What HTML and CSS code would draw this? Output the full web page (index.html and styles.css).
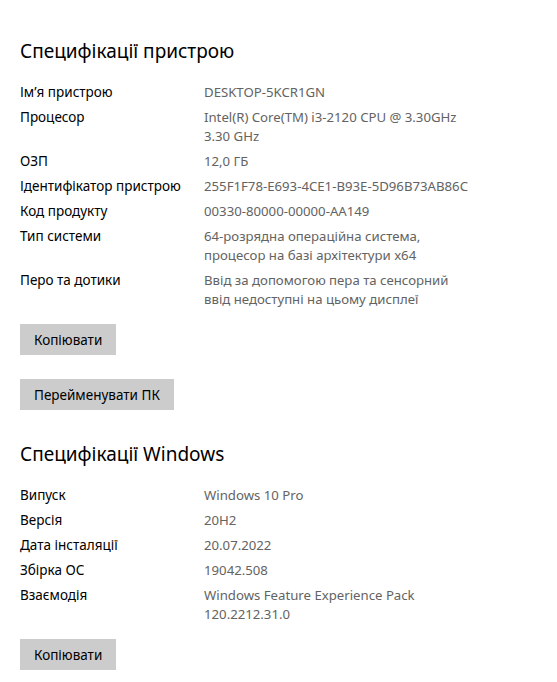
FILE: index.html
```html
<!DOCTYPE html>
<html lang="uk">
<head>
  <meta charset="UTF-8">
  <title>Про систему</title>
  <link rel="stylesheet" href="styles.css">
</head>
<body>

  <!-- Device specs -->
  <section class="section">
    <h2>Специфікації пристрою</h2>
    <dl class="specs">
      <dt>Ім’я пристрою</dt>
      <dd>DESKTOP-5KCR1GN</dd>

      <dt>Процесор</dt>
      <dd>Intel(R) Core(TM) i3-2120 CPU @ 3.30GHz<br>3.30 GHz</dd>

      <dt>ОЗП</dt>
      <dd>12,0 ГБ</dd>

      <dt>Ідентифікатор пристрою</dt>
      <dd>255F1F78-E693-4CE1-B93E-5D96B73AB86C</dd>

      <dt>Код продукту</dt>
      <dd>00330-80000-00000-AA149</dd>

      <dt>Тип системи</dt>
      <dd>64-розрядна операційна система,<br>процесор на базі архітектури x64</dd>

      <dt>Перо та дотики</dt>
      <dd>Ввід за допомогою пера та сенсорний<br>ввід недоступні на цьому дисплеї</dd>
    </dl>
    <button type="button">Копіювати</button>
    <button type="button" class="rename">Перейменувати ПК</button>
  </section>

  <!-- Windows specs -->
  <section class="section">
    <h2>Специфікації Windows</h2>
    <dl class="specs">
      <dt>Випуск</dt>
      <dd>Windows 10 Pro</dd>

      <dt>Версія</dt>
      <dd>20H2</dd>

      <dt>Дата інсталяції</dt>
      <dd>20.07.2022</dd>

      <dt>Збірка ОС</dt>
      <dd>19042.508</dd>

      <dt>Взаємодія</dt>
      <dd>Windows Feature Experience Pack<br>120.2212.31.0</dd>
    </dl>
    <button type="button">Копіювати</button>
  </section>

</body>
</html>
```

FILE: styles.css
```css
* {
  box-sizing: border-box;
  font-family: "Noto Sans", "Open Sans", sans-serif;
}

body {
  margin: 0;
  padding: 0 20px;
  background-color: #fff;
  color: #000;
}

.section {
  display: flex;
  flex-direction: column;
  align-items: flex-start;
}

h2 {
  margin: 37px 0 0;
  font-size: 19px;
  font-weight: normal;
  line-height: 28px;
}

.section + .section h2 {
  margin-top: 30px;
}

.specs {
  display: grid;
  grid-template-columns: 184px 1fr;
  row-gap: 6px;
  margin: 18px 0 0;
  font-size: 13.5px;
  line-height: 19px;
}

.specs dt {
  color: #000;
}

.specs dd {
  margin: 0;
  color: #636363;
  font-size: 13.2px;
}

button {
  margin-top: 15px;
  height: 31px;
  padding: 0 14px;
  background-color: #cccccc;
  border: none;
  color: #000;
  font-size: 13.5px;
  cursor: pointer;
}

button.rename {
  margin-top: 24px;
}
```
